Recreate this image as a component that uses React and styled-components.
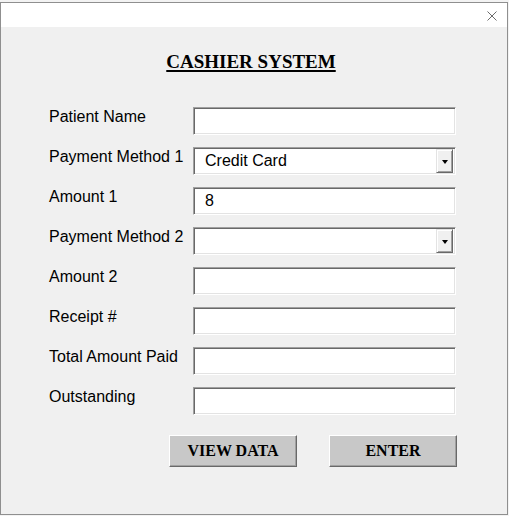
import React from 'react';
import styled, { createGlobalStyle } from 'styled-components';

const GlobalStyle = createGlobalStyle`
  html, body {
    margin: 0;
    padding: 0;
    background: #f3f3f3;
  }
  #root {
    width: 509px;
    height: 516px;
    overflow: hidden;
  }
`;

const Window = styled.div`
  box-sizing: border-box;
  display: flex;
  flex-direction: column;
  margin-top: 2px;
  width: 508px;
  height: 513px;
  border: 1px solid #8f8f8f;
  background: #f0f0f0;
`;

const TitleBar = styled.div`
  display: flex;
  justify-content: flex-end;
  align-items: center;
  height: 24px;
  padding-right: 10px;
  background: #ffffff;
`;

const CloseButton = styled.span`
  display: flex;
  width: 10px;
  height: 10px;
  margin-top: 1px;
`;

const Body = styled.div`
  display: flex;
  flex-direction: column;
  padding-top: 24px;
`;

const Heading = styled.h1`
  margin: 0 6px 0 0;
  text-align: center;
  font-family: "Liberation Serif", "Times New Roman", serif;
  font-size: 19px;
  line-height: 22px;
  font-weight: 700;
  color: #000;
  text-decoration: underline;
  text-decoration-thickness: 2px;
  text-underline-offset: 2px;
`;

const Form = styled.div`
  display: grid;
  grid-template-columns: 144px 263px;
  grid-auto-rows: 28px;
  row-gap: 12px;
  margin-top: 34px;
  padding-left: 48px;
`;

const Label = styled.label`
  padding-top: 1px;
  font-family: "Liberation Sans", Tahoma, sans-serif;
  font-size: 16px;
  line-height: 18px;
  color: #000;
`;

const sunken = `
  box-sizing: border-box;
  height: 28px;
  border-style: solid;
  border-width: 1px;
  border-color: #a0a0a0 #ffffff #ffffff #a0a0a0;
  box-shadow: inset 1px 1px 0 #696969, inset -1px -1px 0 #e3e3e3;
  background: #ffffff;
  font-family: "Liberation Sans", Tahoma, sans-serif;
  font-size: 16px;
  color: #000;
`;

const TextBox = styled.input`
  ${sunken}
  width: 263px;
  margin: 0;
  padding: 0 0 0 11px;
  outline: none;
`;

const Combo = styled.div`
  ${sunken}
  display: flex;
  align-items: center;
  justify-content: space-between;
  padding: 1px 2px 1px 11px;
`;

const ComboText = styled.span`
  line-height: 18px;
`;

const DropButton = styled.span`
  box-sizing: border-box;
  display: flex;
  align-items: center;
  justify-content: center;
  width: 17px;
  height: 24px;
  background: #f0f0f0;
  border-style: solid;
  border-width: 1px;
  border-color: #e3e3e3 #696969 #696969 #e3e3e3;
  box-shadow: inset 1px 1px 0 #ffffff, inset -1px -1px 0 #a0a0a0;
`;

const Arrow = styled.span`
  width: 0;
  height: 0;
  margin-top: 1px;
  border-left: 3.5px solid transparent;
  border-right: 3.5px solid transparent;
  border-top: 4px solid #000;
`;

const ButtonRow = styled.div`
  display: flex;
  gap: 32px;
  margin-top: 20px;
  padding-left: 168px;
`;

const Button = styled.button`
  box-sizing: border-box;
  width: 128px;
  height: 32px;
  margin: 0;
  padding: 0;
  background: #c8c8c8;
  border-style: solid;
  border-width: 1px;
  border-color: #ffffff #696969 #696969 #ffffff;
  box-shadow: inset -1px -1px 0 #a0a0a0;
  font-family: "Liberation Serif", "Times New Roman", serif;
  font-size: 16px;
  font-weight: 700;
  color: #000;
`;

const fields = [
  { label: 'Patient Name' },
  { label: 'Payment Method 1', combo: true, value: 'Credit Card' },
  { label: 'Amount 1', value: '8' },
  { label: 'Payment Method 2', combo: true },
  { label: 'Amount 2' },
  { label: 'Receipt #' },
  { label: 'Total Amount Paid' },
  { label: 'Outstanding' },
];

const App = () => (
  <>
    <GlobalStyle />
    <Window>
      <TitleBar>
        <CloseButton>
          <svg width="10" height="10" viewBox="0 0 10 10">
            <path d="M0.5 0.5 L9.5 9.5 M9.5 0.5 L0.5 9.5" stroke="#6b6b6b" strokeWidth="1" fill="none" />
          </svg>
        </CloseButton>
      </TitleBar>
      <Body>
        <Heading>CASHIER SYSTEM</Heading>
        <Form>
          {fields.map((f) => (
            <React.Fragment key={f.label}>
              <Label>{f.label}</Label>
              {f.combo ? (
                <Combo>
                  <ComboText>{f.value || ''}</ComboText>
                  <DropButton>
                    <Arrow />
                  </DropButton>
                </Combo>
              ) : (
                <TextBox readOnly value={f.value || ''} />
              )}
            </React.Fragment>
          ))}
        </Form>
        <ButtonRow>
          <Button>VIEW DATA</Button>
          <Button>ENTER</Button>
        </ButtonRow>
      </Body>
    </Window>
  </>
);

export default App;
